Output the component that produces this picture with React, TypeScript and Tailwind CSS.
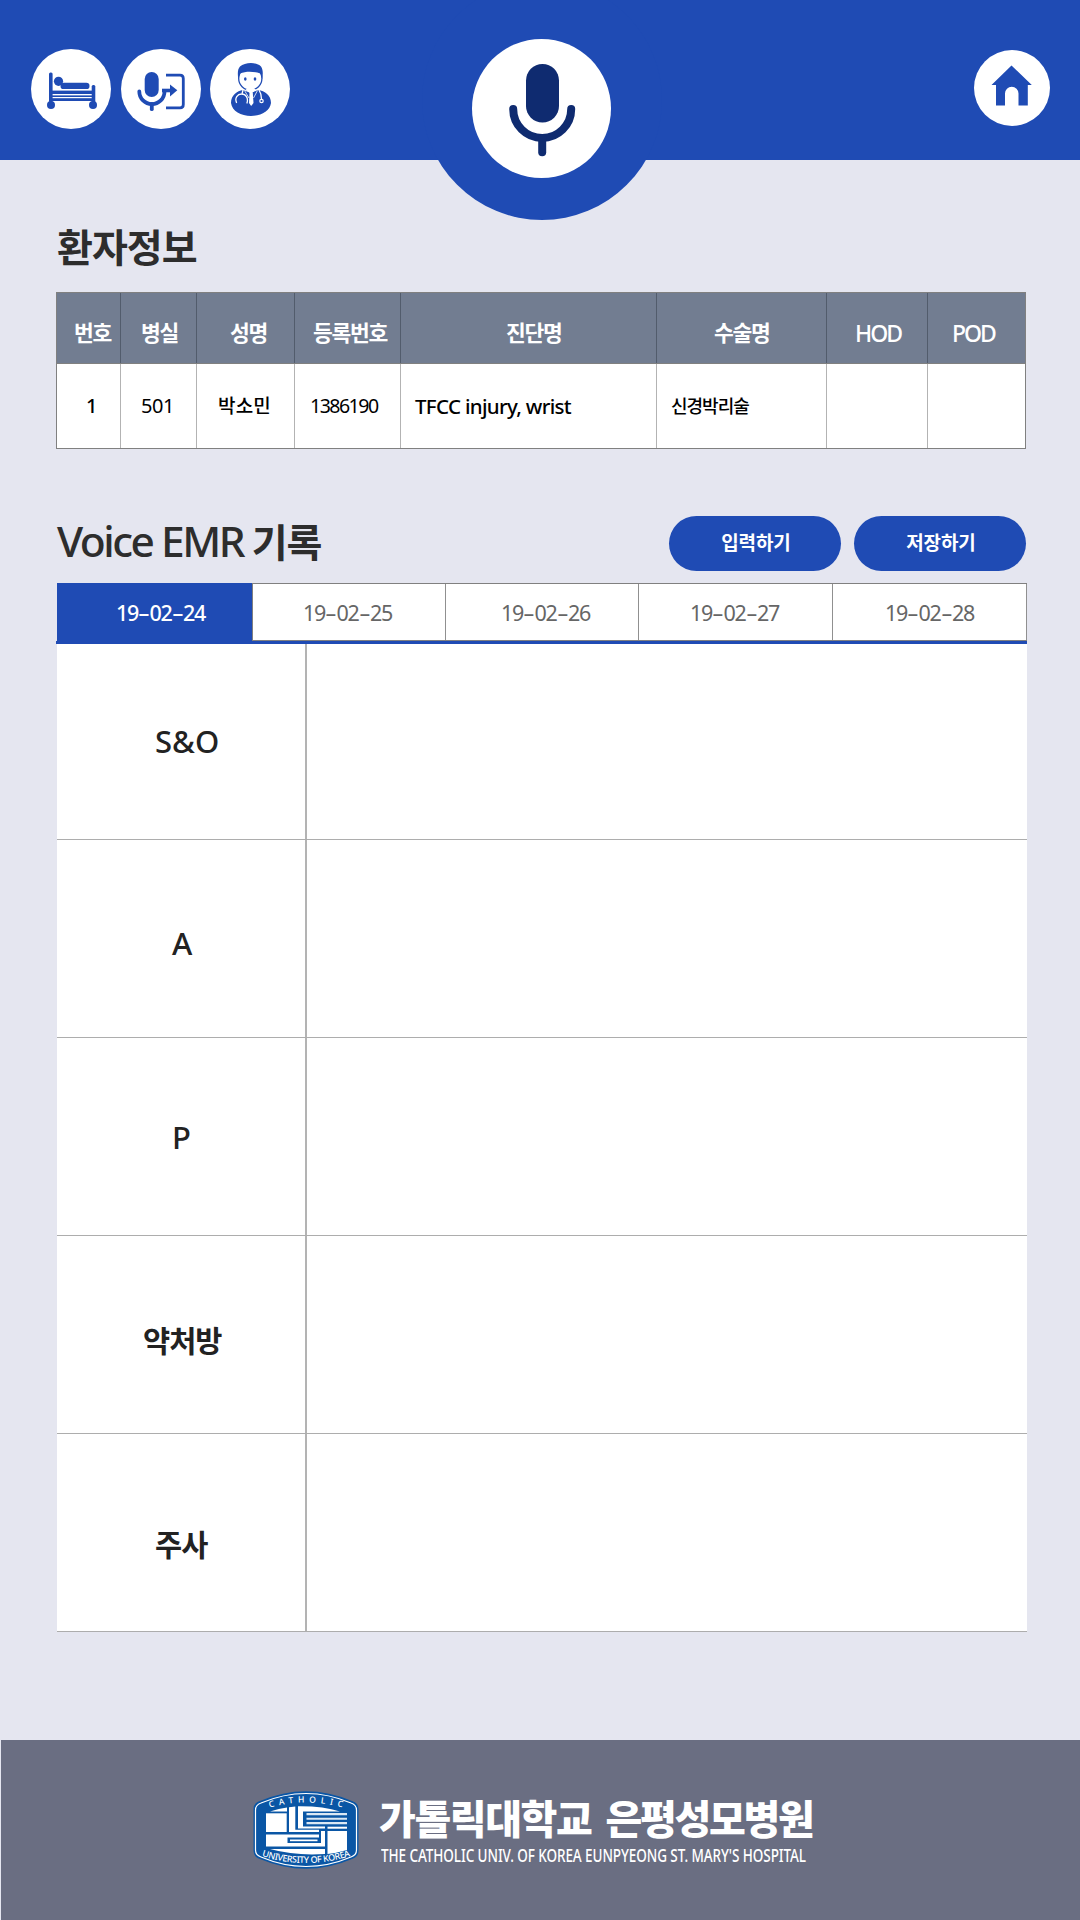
import React from "react";

const columns = [
  { head: "번호", value: "1", w: "w-[64px]", hp: "pl-[17px]", vp: "pl-[29px]", track: "text-[20px]" },
  { head: "병실", value: "501", w: "w-[76px]", hp: "pl-[20px]", vp: "pl-[20px]", track: "text-[20px] font-normal tracking-[-0.4px]" },
  { head: "성명", value: "박소민", w: "w-[98px]", hp: "pl-[33px]", vp: "pl-[21px]", track: "text-[19px] tracking-[0.2px]" },
  { head: "등록번호", value: "1386190", w: "w-[106px]", hp: "pl-[18px]", vp: "pl-[15px]", track: "text-[19.5px] font-normal tracking-[-1.5px]" },
  { head: "진단명", value: "TFCC injury, wrist", w: "w-[256px]", hp: "pl-[105px]", vp: "pl-[14px]", track: "text-[20.5px] tracking-[-0.68px]" },
  { head: "수술명", value: "신경박리술", w: "w-[170px]", hp: "pl-[57px]", vp: "pl-[14px]", track: "text-[18px] tracking-[-1px]" },
  { head: "HOD", value: "", w: "w-[101px]", hp: "pl-[28px]", vp: "", track: "" },
  { head: "POD", value: "", w: "w-[97px]", hp: "pl-[24px]", vp: "", track: "" },
];

const dates = [
  { d: "19-02-25", w: "w-[193px]", p: "pl-[50px]" },
  { d: "19-02-26", w: "w-[193px]", p: "pl-[55px]" },
  { d: "19-02-27", w: "w-[194px]", p: "pl-[51px]" },
  { d: "19-02-28", w: "w-[194px]", p: "pl-[52px]" },
];

const rows = [
  { label: "S&O", h: "h-[196px]", p: "pl-[98px]", t: "pt-[81px]", s: "text-[31px] font-medium" },
  { label: "A", h: "h-[198px]", p: "pl-[115px]", t: "pt-[87px]", s: "text-[31px] font-medium" },
  { label: "P", h: "h-[198px]", p: "pl-[115px]", t: "pt-[83px]", s: "text-[31px] font-medium" },
  { label: "약처방", h: "h-[198px]", p: "pl-[86px]", t: "pt-[89px]", s: "text-[29.5px] font-bold tracking-[-1px]" },
  { label: "주사", h: "h-[198px]", p: "pl-[98px]", t: "pt-[95px]", s: "text-[29.5px] font-bold tracking-[-1px]" },
];

function DateText({ value }: { value: string }) {
  return (
    <span className="text-[21.5px] leading-none tracking-[-1.3px] whitespace-nowrap">
      {value.split("-").map((part, i) => (
        <React.Fragment key={i}>
          {i > 0 && <span className="inline-block w-[11.5px] origin-left scale-x-[1.7]">-</span>}
          {part}
        </React.Fragment>
      ))}
    </span>
  );
}

function BedIcon() {
  return (
    <svg viewBox="0 0 80 80" className="size-20" fill="#1f4bb4">
      <rect x="18" y="23.5" width="3.6" height="30" rx="1.5" />
      <rect x="60.7" y="36" width="3.6" height="18" rx="1.5" />
      <circle cx="27.5" cy="32.3" r="4.6" />
      <rect x="29.5" y="33.7" width="29" height="6.4" rx="3.2" />
      <rect x="20" y="41.6" width="43" height="3.4" />
      <rect x="20" y="46.4" width="43" height="1.6" />
      <rect x="20" y="49.2" width="43" height="2.8" />
      <circle cx="20" cy="56" r="4" />
      <circle cx="62" cy="56" r="4" />
    </svg>
  );
}

function VoiceInputIcon() {
  return (
    <svg viewBox="0 0 80 80" className="size-20" fill="none" stroke="#1f4bb4">
      <rect x="23.7" y="23" width="14" height="25" rx="7" fill="#1f4bb4" stroke="none" />
      <path d="M18.3 42.5A12.6 12.6 0 0 0 43.5 42.5" strokeWidth="3.8" strokeLinecap="round" />
      <path d="M30.8 55V60.2" strokeWidth="3.8" strokeLinecap="round" />
      <path d="M45 26.2H59Q62.3 26.2 62.3 29.5V55.5Q62.3 58.8 59 58.8H45" strokeWidth="2.8" />
      <path d="M41 41.5H50" strokeWidth="3.6" />
      <path d="M49 35.5L56.3 41.3L49 47.5Z" fill="#1f4bb4" stroke="none" />
    </svg>
  );
}

function DoctorIcon() {
  return (
    <svg viewBox="0 0 80 80" className="size-20">
      <path d="M21 54C21 46 27 42 33 41L41 44L48 41C55 42 61 46 61 54C60 62 51 67 41 67C31 67 22 62 21 54Z" fill="#1f4bb4" />
      <circle cx="40.3" cy="29.5" r="11.6" fill="#fff" stroke="#1f4bb4" strokeWidth="1.3" />
      <path d="M28.3 30C27.5 25 27.5 20 30 17.5C35 12.8 47 12.8 51 17.5C53.3 21 53 25.5 52.2 30L50.5 24.5C43 22 36 22 30 24.5Z" fill="#1f4bb4" />
      <ellipse cx="35.3" cy="30" rx="1.3" ry="1.8" fill="#1f4bb4" />
      <ellipse cx="45" cy="30" rx="1.3" ry="1.8" fill="#1f4bb4" />
      <path d="M35.5 40.5L41 45L46 40.5L43.5 39.5H38Z" fill="#fff" />
      <path d="M39.5 44H42.8L43.5 54L41.2 57L39 54Z" fill="#fff" />
      <path d="M34.5 41.5L39 49M47.5 41.5L43.5 49" stroke="#fff" strokeWidth=".8" />
      <path d="M33 41L32 45M26.5 53.5C24.5 49 27.5 45 31.5 45C36 45 38.5 49 37 54M49 41C51 44 51.5 47 51.5 50" fill="none" stroke="#fff" strokeWidth="1.3" strokeLinecap="round" />
      <circle cx="51.5" cy="52" r="1.7" fill="#1f4bb4" stroke="#fff" strokeWidth="1.2" />
    </svg>
  );
}

function MicIcon() {
  return (
    <svg viewBox="0 0 139 139" className="size-[139px]" fill="none" stroke="#0f2b70">
      <rect x="54" y="25" width="33" height="58.5" rx="16.5" fill="#0f2b70" stroke="none" />
      <path d="M41.200 70A29 29 0 0 0 99.200 70" strokeWidth="8" strokeLinecap="round" />
      <path d="M70.200 99V113.300" strokeWidth="8" strokeLinecap="round" />
    </svg>
  );
}

function HomeIcon() {
  return (
    <svg viewBox="0 0 76 76" className="size-[76px]">
      <path d="M37.5 15.5L57.8 35H53.8V55.5H44.5V43.5A6.7 6.7 0 0 0 31 43.5V55.5H22V35H17.5Z" fill="#1f4bb4" />
    </svg>
  );
}

function UniversityLogo() {
  return (
    <svg viewBox="0 0 106 78" className="h-[78px] w-[106px] shrink-0">
      <defs>
        <path id="arcTop" d="M10 18.5Q53 4.500 96 18.500" />
        <path id="arcBottom" d="M4 63.500Q53 80.500 102 63.500" />
      </defs>
      <path d="M7 10Q53 -9.500 99 10Q105.500 12 105.500 18V60Q105.500 66 99 68Q53 87.500 7 68Q.5 66 .5 60V18Q.5 12 7 10Z" fill="#0a56a5" />
      <path d="M8 12Q53 -7 98 12Q103.500 14 103.500 19V59Q103.500 64 98 66Q53 85 8 66Q2.500 64 2.500 59V19Q2.500 14 8 12Z" fill="none" stroke="#fff" strokeWidth="1.2" />
      <g fill="#fff">
        <path d="M17 20.500Q26 17.500 34 16.500V20.500Z" />
        <path d="M13 22.300H33.700V41H13Z" />
        <path d="M36 16.200L42.300 15.500V38.700H66V41H36Z" />
        <path d="M45 15.300Q70 15 87 20.500H50V35.500H72V37.500H45Z" />
        <path d="M74.500 35.700H94V37.700H74.500Z" />
        <path d="M74.500 40H94V59Q84 62 74.500 63Z" />
        <path d="M13 43.500H66V46.500H34.500V52H68V40H72V55.500H13Z" />
        <path d="M37 48.500H64.500V50.200H37Z" />
        <path d="M17 58H72V63Q42 65 17 58Z" />
      </g>
      <path d="M53.500 22H94V24.300H53.500ZM53.500 26.700H94V28.700H53.500ZM53.500 31H94V33.300H53.500Z" fill="#dbe8f4" />
      <g fill="#fff" fontFamily="Noto Sans" fontWeight="500" textAnchor="middle">
        <text fontSize="8.600" letterSpacing="4.600"><textPath href="#arcTop" startOffset="52.500%">CATHOLIC</textPath></text>
        <text fontSize="9" letterSpacing="-.4"><textPath href="#arcBottom" startOffset="50%">UNIVERSITY OF KOREA</textPath></text>
      </g>
    </svg>
  );
}

export default function App() {
  return (
    <div className="flex h-[1920px] w-[1080px] flex-col overflow-hidden bg-[#e5e6f0] font-['Noto_Sans','Noto_Sans_CJK_KR',sans-serif]">
      <header className="relative flex h-[160px] shrink-0 justify-between bg-[#1f4bb4] pl-[31px] pr-[30px]">
        <div className="absolute left-[422px] top-[-20px] flex size-[240px] justify-center rounded-full bg-[#1f4bb4] pr-px pt-[59px]">
          <button className="size-[139px] rounded-full bg-white"><MicIcon /></button>
        </div>
        <nav className="flex pt-[49px]">
          <button className="size-20 rounded-full bg-white"><BedIcon /></button>
          <button className="ml-[10px] size-20 rounded-full bg-white"><VoiceInputIcon /></button>
          <button className="ml-[9px] size-20 rounded-full bg-white"><DoctorIcon /></button>
        </nav>
        <button className="mt-[50px] size-[76px] rounded-full bg-white"><HomeIcon /></button>
      </header>

      <main className="flex h-[1580px] shrink-0 flex-col pl-[56px]">
        <h1 className="mt-[66px] h-[66px] pl-px pt-px text-[39px] font-bold leading-[40px] tracking-[-1px] text-[#2d2d2d]">환자정보</h1>
        <section className="w-[970px] border border-[#808080] bg-white">
          <div className="flex h-[71px] border-b border-[#808080] bg-[#727d91] text-white">
            {columns.map((c, i) => (
              <div key={c.head} className={`${c.w} ${c.hp} ${i < 7 ? "border-r border-[#525c6c]" : ""} ${i > 5 ? "text-[23px] font-medium tracking-[-2px]" : "text-[21.5px] font-bold tracking-[-1.3px]"} pt-[28px] leading-6 whitespace-nowrap`}>{c.head}</div>
            ))}
          </div>
          <div className="flex h-[84px] font-medium text-black">
            {columns.map((c, i) => (
              <div key={c.head} className={`${c.w} ${c.vp} ${c.track} ${i < 7 ? "border-r border-[#b3b3b3]" : ""} pt-[30px] leading-6 whitespace-nowrap`}>{c.value}</div>
            ))}
          </div>
        </section>

        <div className="mt-[67px] flex h-[67px]">
          <h2 className="w-[613px] pl-px pt-[5px] text-[42.5px] font-medium leading-[40px] tracking-[-2.5px] text-[#2d2d2d] whitespace-nowrap">Voice EMR <span className="text-[39px] font-bold tracking-[-1px]">기록</span></h2>
          <button className="h-[55px] w-[172px] rounded-full bg-[#1f4bb4] pl-[2px] text-[19px] font-bold tracking-[-0.1px] text-white">입력하기</button>
          <button className="ml-[13px] h-[55px] w-[172px] rounded-full bg-[#1f4bb4] pl-[2px] text-[19px] font-bold tracking-[-0.1px] text-white">저장하기</button>
        </div>

        <div className="flex h-[61px] w-[971px] shrink-0 border-b-[3px] border-[#1f4bb4] pl-px">
          <div className="w-[195px] bg-[#1f4bb4] pl-[59px] pt-[19px] font-medium text-white"><DateText value="19-02-24" /></div>
          <div className="flex h-[58px] border border-r-0 border-[#808080] bg-white text-[#666]">
            {dates.map((t) => (
              <div key={t.d} className={`${t.w} ${t.p} border-r border-[#909090] pt-[18px]`}><DateText value={t.d} /></div>
            ))}
          </div>
        </div>
        <section className="ml-px w-[970px] bg-white">
          {rows.map((r) => (
            <div key={r.label} className={`${r.h} flex border-b border-[#adadad]`}>
              <div className={`${r.p} ${r.t} ${r.s} w-[250px] border-r-2 border-[#b3b3b3] leading-8 text-[#222] whitespace-nowrap`}>{r.label}</div>
              <div className="flex-1" />
            </div>
          ))}
        </section>
      </main>

      <footer className="ml-px flex h-[180px] shrink-0 bg-[#6a6e82] pl-[252px] pt-[51px] text-white">
        <UniversityLogo />
        <div className="ml-[20px] pt-[7px]">
          <p className="text-[40px] font-black leading-[42px] tracking-[-1.4px] whitespace-nowrap">가톨릭대학교 <span className="ml-[5px] tracking-[-2.3px]">은평성모병원</span></p>
          <p className="ml-[2px] mt-[5px] w-[580px] origin-left scale-x-[0.73] text-[18.5px] font-medium leading-[20px] tracking-[-0.1px] whitespace-nowrap">THE CATHOLIC UNIV. OF KOREA EUNPYEONG ST. MARY'S HOSPITAL</p>
        </div>
      </footer>
    </div>
  );
}
